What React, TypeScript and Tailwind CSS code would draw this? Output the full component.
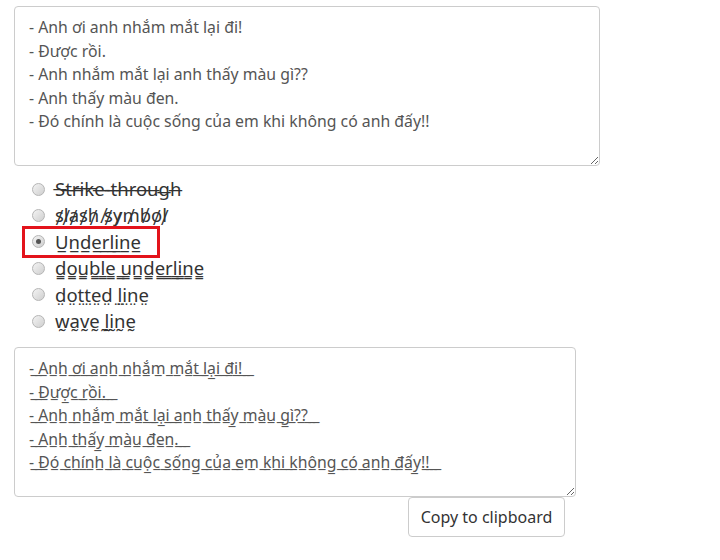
import { useState } from "react";

const lines = [
  "- Anh ơi anh nhắm mắt lại đi!",
  "- Được rồi.",
  "- Anh nhắm mắt lại anh thấy màu gì??",
  "- Anh thấy màu đen.",
  "- Đó chính là cuộc sống của em khi không có anh đấy!!",
];

const styles = [
  { id: "strike", mark: "\u0336", label: "Strike-through" },
  { id: "slash", mark: "\u0338", label: "slash symbol" },
  { id: "underline", mark: "\u0332", label: "Underline" },
  { id: "double", mark: "\u0333", label: "double underline" },
  { id: "dotted", mark: "\u0324", label: "dotted line" },
  { id: "wave", mark: "\u0330", label: "wave line" },
];

const decorate = (text: string, mark: string) =>
  Array.from(text)
    .map((ch) => ch + mark)
    .join("");

const App = () => {
  const [active, setActive] = useState("underline");
  const mark = styles.find((s) => s.id === active)?.mark ?? "";
  const input = lines.join("\n");
  const output = lines.map((l) => decorate(l + "  ", mark)).join("\n");

  return (
    <div className="min-h-[560px] w-[720px] bg-white pl-[14px] pt-[6px] font-['Noto_Sans',sans-serif]">
      {/* Input */}
      <textarea
        readOnly
        value={input}
        className="block h-[160px] w-[586px] rounded-[4px] border border-[#ccc] px-[14px] py-[9px] text-[15.8px] leading-[23.5px] text-[#555] outline-none"
      />

      {/* Styles */}
      <ul className="mt-[10px] flex flex-col">
        {styles.map((s) => (
          <li key={s.id} className="flex h-[26.4px] items-center">
            <label
              onClick={() => setActive(s.id)}
              className={`flex cursor-pointer items-center gap-[10px] text-[18.5px] text-[#333] ${
                active === s.id
                  ? "-my-[3px] ml-[8px] h-[32px] w-[138px] border-[3px] border-[#e3131b] pl-[7px]"
                  : "ml-[18px]"
              }`}
            >
              <span className="relative flex h-[13px] w-[13px] items-center justify-center rounded-full border border-[#b5b5b5] bg-gradient-to-br from-[#f4f4f4] to-[#cfcfcf]">
                {active === s.id && (
                  <span className="h-[5px] w-[5px] rounded-full bg-[#555]" />
                )}
              </span>
              <span className="whitespace-nowrap leading-none">
                {decorate(s.label, s.mark)}
              </span>
            </label>
          </li>
        ))}
      </ul>

      {/* Output */}
      <textarea
        readOnly
        value={output}
        className="mt-[13px] block h-[150px] w-[562px] rounded-[4px] border border-[#ccc] px-[14px] py-[9px] text-[15.8px] leading-[23.5px] text-[#555] outline-none"
      />

      <button className="ml-[394px] h-[40px] w-[157px] rounded-[4px] border border-[#ccc] bg-white text-[16px] text-[#333]">
        Copy to clipboard
      </button>
    </div>
  );
};

export default App;
